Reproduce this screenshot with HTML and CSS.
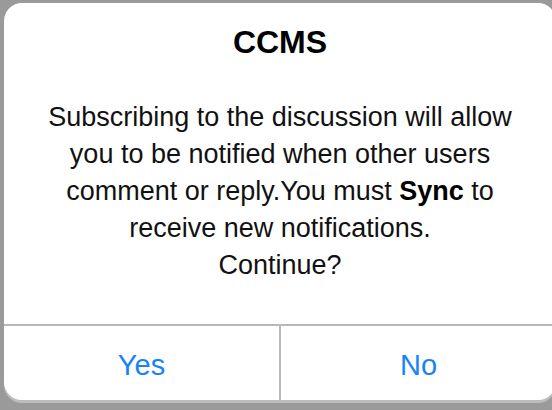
FILE: index.html
```html
<!DOCTYPE html>
<html>
<head>
<meta charset="utf-8">
<link rel="stylesheet" href="styles.css">
</head>
<body>
<div class="alert">
  <div class="alert-content">
    <div class="alert-title">CCMS</div>
    <div class="alert-message">Subscribing to the discussion will allow<br>you to be notified when other users<br>comment or reply.You must <b>Sync</b> to<br>receive new notifications.<br>Continue?</div>
  </div>
  <div class="alert-buttons">
    <div class="alert-button">Yes</div>
    <div class="alert-button">No</div>
  </div>
</div>
</body>
</html>
```
FILE: styles.css
```css
html, body {
  margin: 0;
  padding: 0;
  width: 552px;
  height: 410px;
  overflow: hidden;
  background: #9a9a9a;
}
body {
  padding: 3px 0 0 4px;
  box-sizing: border-box;
  font-family: "Liberation Sans", Arial, sans-serif;
}
.alert {
  width: 552px;
  height: 397px;
  background: #fff;
  border-radius: 18px;
  box-shadow: 0 3px 0 #bdbdbd;
  display: flex;
  flex-direction: column;
  overflow: hidden;
}
.alert-content {
  height: 323px;
  flex: none;
  box-sizing: border-box;
  padding-top: 21px;
  border-bottom: 2px solid #b8b8b8;
  text-align: center;
  color: #111;
}
.alert-title {
  font-size: 32px;
  font-weight: bold;
  line-height: 36px;
  color: #000;
}
.alert-message {
  margin-top: 39px;
  font-size: 27px;
  line-height: 37px;
}
.alert-message b {
  font-weight: bold;
  color: #000;
}
.alert-buttons {
  flex: 1;
  display: flex;
}
.alert-button {
  flex: 1;
  display: flex;
  align-items: center;
  justify-content: center;
  font-size: 29px;
  color: #1982f9;
  padding-top: 5px;
}
.alert-button + .alert-button {
  border-left: 2px solid #b8b8b8;
}
```
